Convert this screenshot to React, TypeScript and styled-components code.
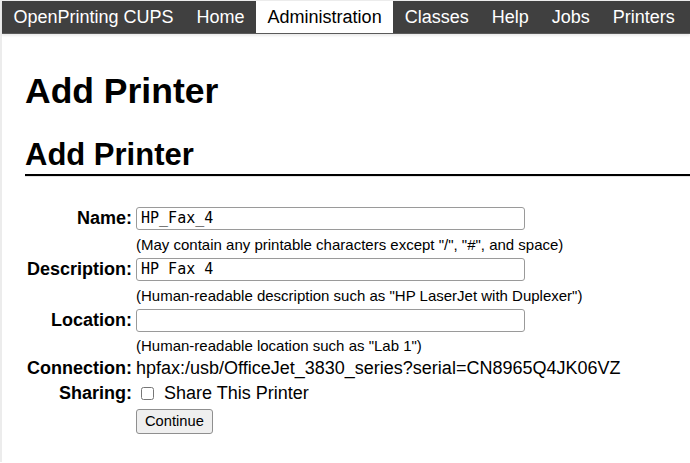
import styled, { createGlobalStyle } from "styled-components";

const GlobalStyle = createGlobalStyle`
  html, body {
    margin: 0;
    padding: 0;
    background: #fff;
  }
  body {
    font-family: "Liberation Sans", Arial, sans-serif;
    color: #000;
  }
`;

const navItems = [
  { label: "OpenPrinting CUPS" },
  { label: "Home" },
  { label: "Administration", active: true },
  { label: "Classes" },
  { label: "Help" },
  { label: "Jobs" },
  { label: "Printers" },
];

const Page = styled.div`
  border-left: 2px solid #ececec;
  border-top: 1px solid #ececec;
  min-height: 462px;
  box-sizing: border-box;
`;

const NavBar = styled.nav`
  display: flex;
  background: #404040;
  border-bottom: 1px solid #5a5a5a;
  box-shadow: 0 2px 2px rgba(0, 0, 0, 0.08);
`;

const NavItem = styled.a<{ $active?: boolean }>`
  display: block;
  padding: 6px 11.5px 5px;
  font-size: 18px;
  line-height: 21px;
  text-decoration: none;
  color: ${(p) => (p.$active ? "#000" : "#fff")};
  background: ${(p) => (p.$active ? "#fff" : "transparent")};
  cursor: pointer;
`;

const Main = styled.main`
  padding: 37px 0 0 23px;
`;

const Title = styled.h1`
  margin: 0;
  font-size: 35.5px;
  font-weight: bold;
  line-height: 41px;
`;

const SubTitle = styled.h2`
  margin: 25px 0 0;
  padding-bottom: 1px;
  font-size: 31px;
  font-weight: bold;
  line-height: 36px;
  border-bottom: 2px solid #000;
  box-shadow: 0 1px 0 #e4e4e4;
`;

const Form = styled.form`
  display: grid;
  grid-template-columns: max-content 1fr;
  column-gap: 4px;
  margin: 29px 0 0 2px;
  align-items: center;
`;

const Label = styled.label`
  text-align: right;
  font-size: 18px;
  font-weight: bold;
  line-height: 21px;
`;

const Field = styled.div<{ $height: number }>`
  display: flex;
  align-items: center;
  height: ${(p) => p.$height}px;
  font-size: 18px;
`;

const TextInput = styled.input`
  box-sizing: border-box;
  width: 389px;
  height: 23px;
  padding: 0 4px 1px;
  border: 1px solid #9a9a9a;
  border-radius: 3px;
  font-family: "DejaVu Sans Mono", "Liberation Mono", monospace;
  font-size: 15px;
  line-height: normal;
  color: #000;
  outline: none;
`;

const Hint = styled.span`
  font-size: 15px;
`;

const CheckBox = styled.input`
  width: 13px;
  height: 13px;
  margin: 0 10px 0 5px;
`;

const Button = styled.button`
  box-sizing: border-box;
  height: 25px;
  padding: 0 8px;
  border: 1px solid #8f8f8f;
  border-radius: 3px;
  background: #efefef;
  font-family: "Liberation Sans", Arial, sans-serif;
  font-size: 14.7px;
  color: #000;
`;

export default function App() {
  return (
    <>
      <GlobalStyle />
      <Page>
        <NavBar>
          {navItems.map((item) => (
            <NavItem key={item.label} $active={item.active}>
              {item.label}
            </NavItem>
          ))}
        </NavBar>
        <Main>
          <Title>Add Printer</Title>
          <SubTitle>Add Printer</SubTitle>
          <Form onSubmit={(e) => e.preventDefault()}>
            <Label>Name:</Label>
            <Field $height={27}>
              <TextInput defaultValue="HP_Fax_4" />
            </Field>
            <span />
            <Field $height={24}>
              <Hint>(May contain any printable characters except "/", "#", and space)</Hint>
            </Field>

            <Label>Description:</Label>
            <Field $height={27}>
              <TextInput defaultValue="HP Fax 4" />
            </Field>
            <span />
            <Field $height={24}>
              <Hint>(Human-readable description such as "HP LaserJet with Duplexer")</Hint>
            </Field>

            <Label>Location:</Label>
            <Field $height={27}>
              <TextInput defaultValue="" />
            </Field>
            <span />
            <Field $height={23}>
              <Hint>(Human-readable location such as "Lab 1")</Hint>
            </Field>

            <Label>Connection:</Label>
            <Field $height={23}>hpfax:/usb/OfficeJet_3830_series?serial=CN8965Q4JK06VZ</Field>

            <Label>Sharing:</Label>
            <Field $height={27}>
              <CheckBox type="checkbox" />
              Share This Printer
            </Field>

            <span />
            <Field $height={28}>
              <Button type="submit">Continue</Button>
            </Field>
          </Form>
        </Main>
      </Page>
    </>
  );
}
